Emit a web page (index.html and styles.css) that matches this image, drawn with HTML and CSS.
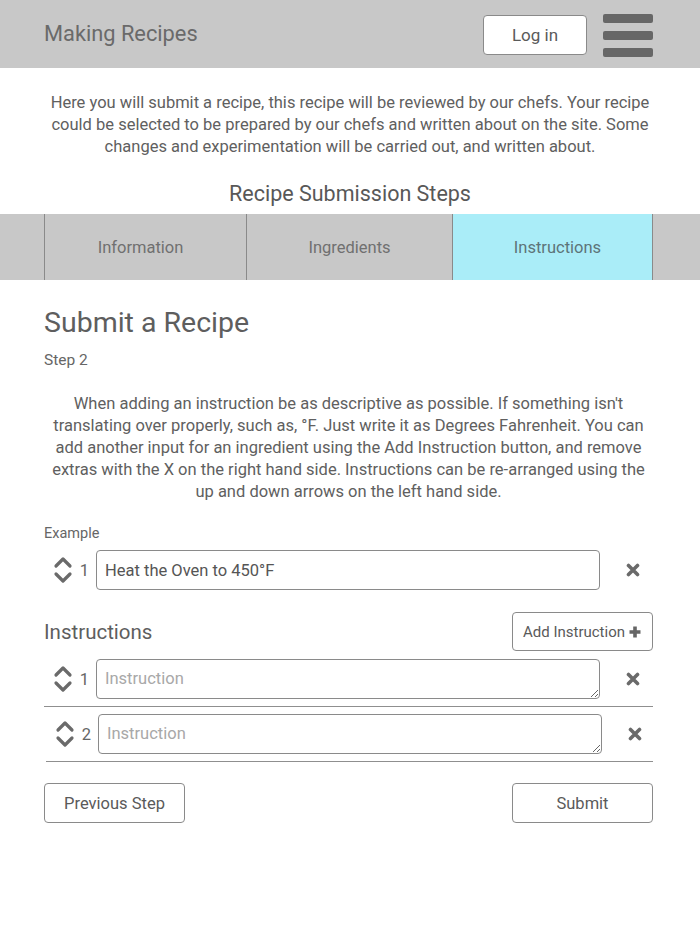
FILE: index.html
```html
<!DOCTYPE html>
<html lang="en">
<head>
<meta charset="utf-8">
<title>Making Recipes</title>
<link rel="stylesheet" href="styles.css">
</head>
<body>
<header class="topbar">
  <div class="brand">Making Recipes</div>
  <div class="topbar-right">
    <button class="btn login">Log in</button>
    <div class="hamburger"><span></span><span></span><span></span></div>
  </div>
</header>

<p class="intro">Here you will submit a recipe, this recipe will be reviewed by our chefs. Your recipe could be selected to be prepared by our chefs and written about on the site. Some changes and experimentation will be carried out, and written about.</p>

<h2 class="steps-title">Recipe Submission Steps</h2>
<nav class="tabs">
  <div class="tabs-inner">
    <div class="tab tab-1">Information</div>
    <div class="tab tab-2">Ingredients</div>
    <div class="tab tab-3 active">Instructions</div>
  </div>
</nav>

<main class="content">
  <h1 class="page-title">Submit a Recipe</h1>
  <div class="step">Step 2</div>
  <p class="desc">When adding an instruction be as descriptive as possible. If something isn't translating over properly, such as, °F. Just write it as Degrees Fahrenheit. You can add another input for an ingredient using the Add Instruction button, and remove extras with the X on the right hand side. Instructions can be re-arranged using the up and down arrows on the left hand side.</p>

  <div class="example-label">Example</div>
  <div class="row example-row">
    <svg class="arrows" viewBox="0 0 20 28" width="20" height="28"><path d="M3 10 L10 3 L17 10" /><path d="M3 18 L10 25 L17 18" /></svg>
    <span class="num">1</span>
    <div class="field filled">Heat the Oven to 450°F</div>
    <svg class="xicon" viewBox="0 0 14 14" width="14" height="14"><path d="M2.5 2.5 L11.5 11.5 M11.5 2.5 L2.5 11.5" /></svg>
  </div>

  <div class="instr-head">
    <h3 class="instr-title">Instructions</h3>
    <button class="btn add">Add Instruction <svg class="plus" viewBox="0 0 14 14" width="14" height="14"><path d="M7 1.5 V12.5 M1.5 7 H12.5" /></svg></button>
  </div>

  <div class="row instr-row">
    <svg class="arrows" viewBox="0 0 20 28" width="20" height="28"><path d="M3 10 L10 3 L17 10" /><path d="M3 18 L10 25 L17 18" /></svg>
    <span class="num">1</span>
    <textarea class="field" rows="1" placeholder="Instruction"></textarea>
    <svg class="xicon" viewBox="0 0 14 14" width="14" height="14"><path d="M2.5 2.5 L11.5 11.5 M11.5 2.5 L2.5 11.5" /></svg>
  </div>
  <div class="row instr-row second">
    <svg class="arrows" viewBox="0 0 20 28" width="20" height="28"><path d="M3 10 L10 3 L17 10" /><path d="M3 18 L10 25 L17 18" /></svg>
    <span class="num">2</span>
    <textarea class="field" rows="1" placeholder="Instruction"></textarea>
    <svg class="xicon" viewBox="0 0 14 14" width="14" height="14"><path d="M2.5 2.5 L11.5 11.5 M11.5 2.5 L2.5 11.5" /></svg>
  </div>

  <div class="footer-btns">
    <button class="btn prev">Previous Step</button>
    <button class="btn submit">Submit</button>
  </div>
</main>
</body>
</html>
```
FILE: styles.css
```css
* { box-sizing: border-box; }
html, body { margin: 0; padding: 0; background: #fff; }
body {
  font-family: Roboto, "Liberation Sans", sans-serif;
  color: #636363;
  width: 700px;
}
.topbar {
  height: 68px;
  background: #c8c8c8;
  display: flex;
  align-items: center;
  justify-content: space-between;
  padding: 0 47px 0 44px;
}
.brand { font-size: 21.8px; color: #6a6a6a; margin-top: -1px; }
.topbar-right { display: flex; align-items: center; gap: 16px; }
.btn {
  font-family: Roboto, "Liberation Sans", sans-serif;
  background: #fff;
  border: 1px solid #8a8a8a;
  border-radius: 4px;
  color: #5a5a5a;
  font-size: 16.5px;
  padding: 0;
  cursor: pointer;
}
.login { width: 104px; height: 40px; font-size: 17px; margin-top: 1px; }
.hamburger { width: 50px; display: flex; flex-direction: column; gap: 8px; margin-top: 2px; }
.hamburger span { display: block; height: 9px; background: #676767; border-radius: 2px; }

.intro {
  margin: 24px 0 0;
  padding: 0 40px;
  text-align: center;
  font-size: 16.5px;
  line-height: 22px;
  color: #606060;
}
.steps-title {
  margin: 23px 0 0;
  font-weight: normal;
  font-size: 21.5px;
  line-height: 25px;
  text-align: center;
  color: #585858;
}
.tabs {
  margin-top: 8px;
  background: #c8c8c8;
  height: 66px;
  padding: 0 47px 0 44px;
}
.tabs-inner { display: flex; height: 100%; }
.tab {
  display: flex;
  align-items: center;
  justify-content: center;
  font-size: 16.5px;
  color: #707070;
  border-left: 1px solid #8a8a8a;
}
.tab-1 { width: 202px; padding-right: 10px; }
.tab-2 { width: 206px; }
.tab-3 { width: 201px; border-right: 1px solid #8a8a8a; padding-left: 10px; }
.tab.active { background: #aaedf8; color: #5d7478; }

.content { padding: 0 47px 0 44px; }
.page-title {
  margin: 26px 0 0;
  font-weight: normal;
  font-size: 28.5px;
  line-height: 34px;
  color: #5e5e5e;
}
.step { margin-top: 10px; font-size: 15.5px; line-height: 20px; color: #666; }
.desc {
  margin: 23px 0 0;
  text-align: center;
  font-size: 16.5px;
  line-height: 22px;
  color: #606060;
}
.example-label { margin-top: 22px; font-size: 14.5px; line-height: 18px; color: #666; }

.row { display: flex; align-items: center; }
.arrows { margin-left: 9px; fill: none; stroke: #6a6a6a; stroke-width: 3.2; stroke-linecap: round; stroke-linejoin: round; }
.num { width: 23px; text-align: center; font-size: 16.5px; color: #666; }
.field {
  width: 504px;
  height: 40px;
  border: 1px solid #8a8a8a;
  border-radius: 4px;
  font-family: Roboto, "Liberation Sans", sans-serif;
  font-size: 16.5px;
  color: #555;
  padding: 0 8px;
  background: #fff;
}
.field.filled { display: flex; align-items: center; }
textarea.field { padding: 9px 8px; line-height: 20px; resize: vertical; display: block; }
textarea.field::placeholder { color: #a8a8a8; }
.xicon { margin-left: 26px; fill: none; stroke: #6a6a6a; stroke-width: 3.6; stroke-linecap: round; }
.example-row { margin-top: 7px; }

.instr-head {
  display: flex;
  justify-content: space-between;
  align-items: center;
  margin-top: 22px;
}
.instr-title { margin: 0; font-weight: normal; font-size: 20.5px; color: #5e5e5e; }
.add { width: 141px; height: 39px; font-size: 15px; display: flex; align-items: center; justify-content: center; gap: 3px; }
.plus { fill: none; stroke: #666; stroke-width: 3.6; }

.instr-row { margin-top: 8px; padding-bottom: 7px; border-bottom: 1px solid #8f8f8f; }
.instr-row.second { margin-top: 7px; margin-left: 2px; }

.footer-btns { display: flex; justify-content: space-between; margin-top: 21px; }
.prev { width: 141px; height: 40px; }
.submit { width: 141px; height: 40px; }
```
